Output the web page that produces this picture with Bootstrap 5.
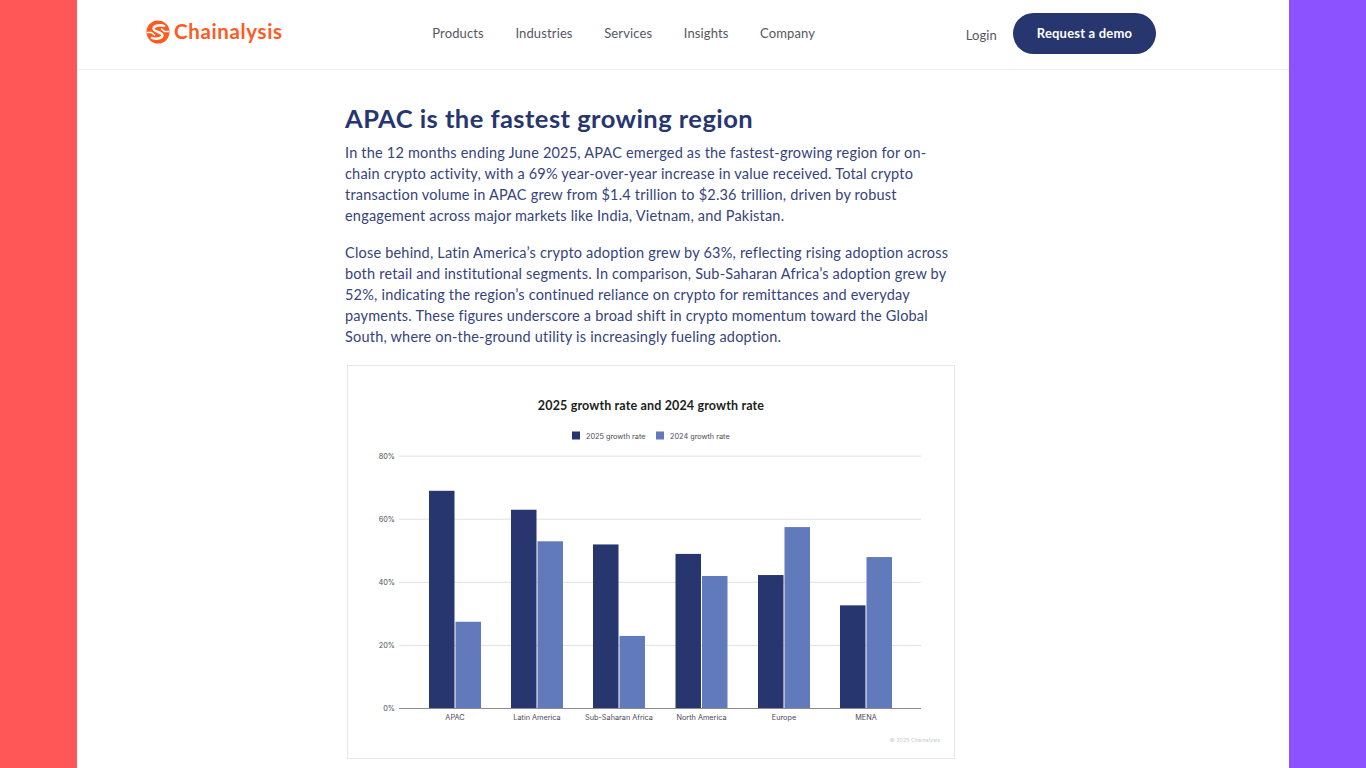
<!DOCTYPE html>
<html lang="en">
<head>
  <meta charset="UTF-8" />
  <meta name="viewport" content="width=device-width, initial-scale=1.0"/>
  <title>Chainalysis - APAC is the fastest growing region</title>
  <link href="https://cdn.jsdelivr.net/npm/bootstrap@5.3.0/dist/css/bootstrap.min.css" rel="stylesheet"/>
  <script src="https://cdn.jsdelivr.net/npm/bootstrap@5.3.0/dist/js/bootstrap.bundle.min.js"></script>
  <style>
  body {
    background: #fff;
    font-family: "Lato", "Liberation Sans", sans-serif;
    height: 768px;
    overflow: hidden;
  }
  .band-red { width: 77px; background: #ff5757; }
  .band-purple { width: 77px; background: #8c52ff; }
  .page-mid { width: 1212px; height: 768px; overflow: hidden; }

  .top-bar {
    height: 70px;
    border-bottom: 1px solid #eeeff2;
    padding: 0 133px 2px 69px;
  }
  .brand-link { margin-bottom: 4px; }
  .brand-word {
    color: #ff5a1f;
    font-size: 20.5px;
    font-weight: 700;
    letter-spacing: .65px;
    line-height: 1;
  }
  .menu-row { margin-left: 149.5px; gap: 31.5px; padding-top: 1px; }
  .menu-row a, .login-link {
    color: #55575f;
    font-size: 13px;
    letter-spacing: .13px;
    text-decoration: none;
  }
  .login-link { margin-left: auto; margin-right: 16px; padding-top: 4px; }
  .demo-btn {
    width: 143px;
    height: 41px;
    background: #27366f;
    color: #fff;
    border-radius: 21px;
    font-size: 13px;
    font-weight: 700;
    letter-spacing: .2px;
    padding: 0;
    border: 0;
  }

  .article-col { width: 611px; margin-left: 268px; padding-top: 32px; color: #36437c; }
  .article-col h2 {
    font-size: 25.5px;
    font-weight: 700;
    line-height: 32px;
    letter-spacing: .45px;
    color: #27366f;
    margin-bottom: 8px;
  }
  .article-col p {
    font-size: 14.5px;
    line-height: 21px;
    letter-spacing: .2px;
    margin-bottom: 16px;
  }
  .chart-box {
    width: 608px;
    height: 394px;
    margin: 18px 0 0 2px;
    border: 1px solid #e6e7ee;
  }
  .chart-box svg { display: block; }
  .chart-title { font-size: 12.5px; font-weight: 700; letter-spacing: .15px; fill: #1c1d22; }
  .chart-small { font-family: "Inter", "Liberation Sans", sans-serif; font-size: 7.3px; fill: #4a4b52; }
  .chart-note { font-family: "Inter", "Liberation Sans", sans-serif; font-size: 5.4px; fill: #c9cad3; }
  .grid-line { stroke: #dfe0e8; stroke-width: 1; }
  .axis-line { stroke: #8a8b90; stroke-width: 1.2; }
  .bar-dark { fill: #27366f; }
  .bar-light { fill: #617abb; }
  </style>
</head>
<body>
<div class="d-flex">
  <div class="band-red"></div>

  <div class="page-mid">
    <header class="top-bar d-flex align-items-center">
      <a href="#" class="brand-link d-flex align-items-center gap-1 text-decoration-none">
        <svg width="24" height="24" viewBox="0 0 24 24">
          <circle cx="12" cy="12" r="11.5" fill="#ff5a1f"/>
          <path d="M19 6.5C15 4.5 8 5 7.5 8.5C7 12 17 12 16.5 15.5C16 19 9 19.5 5 17.5" fill="none" stroke="#fff" stroke-width="2.4"/>
          <path d="M1 12.5L5.5 12.5L9 15.5M23 11.5L18.5 11.5L15 8.5" fill="none" stroke="#fff" stroke-width="1.6"/>
        </svg>
        <span class="brand-word">Chainalysis</span>
      </a>
      <nav class="menu-row d-flex">
        <a href="#">Products</a>
        <a href="#">Industries</a>
        <a href="#">Services</a>
        <a href="#">Insights</a>
        <a href="#">Company</a>
      </nav>
      <a href="#" class="login-link">Login</a>
      <button class="btn demo-btn">Request a demo</button>
    </header>

    <main class="article-col">
      <h2>APAC is the fastest growing region</h2>
      <p>In the 12 months ending June 2025, APAC emerged as the fastest-growing region for on-chain crypto activity, with a 69% year-over-year increase in value received. Total crypto transaction volume in APAC grew from $1.4 trillion to $2.36 trillion, driven by robust engagement across major markets like India, Vietnam, and Pakistan.</p>
      <p>Close behind, Latin America’s crypto adoption grew by 63%, reflecting rising adoption across both retail and institutional segments. In comparison, Sub-Saharan Africa’s adoption grew by 52%, indicating the region’s continued reliance on crypto for remittances and everyday payments. These figures underscore a broad shift in crypto momentum toward the Global South, where on-the-ground utility is increasingly fueling adoption.</p>

      <div class="chart-box">
        <!-- viewBox uses page coordinates minus the box origin (348,366) -->
        <svg id="chart" width="606" height="392" viewBox="348 366 606 392"></svg>
      </div>
    </main>
  </div>

  <div class="band-purple"></div>
</div>

<script>
const NS = 'http://www.w3.org/2000/svg';
const chart = document.getElementById('chart');
const baseY = 708.5, pxPerPct = 3.155;

const grupos = [
  { nombre: 'APAC', x: 429, a: 69, b: 27.5 },
  { nombre: 'Latin America', x: 511, a: 63, b: 53 },
  { nombre: 'Sub-Saharan Africa', x: 593, a: 52, b: 23 },
  { nombre: 'North America', x: 675.5, a: 49, b: 42 },
  { nombre: 'Europe', x: 758, a: 42.3, b: 57.5 },
  { nombre: 'MENA', x: 840, a: 32.7, b: 48 },
];

function add(tag, attrs, text) {
  const el = document.createElementNS(NS, tag);
  Object.keys(attrs).forEach(k => el.setAttribute(k, attrs[k]));
  if (text) el.textContent = text;
  chart.appendChild(el);
}

add('text', { x: 651, y: 410, 'text-anchor': 'middle', class: 'chart-title' }, '2025 growth rate and 2024 growth rate');

add('rect', { x: 572, y: 431.5, width: 8, height: 8, class: 'bar-dark' });
add('text', { x: 586, y: 438.5, class: 'chart-small' }, '2025 growth rate');
add('rect', { x: 656, y: 431.5, width: 8, height: 8, class: 'bar-light' });
add('text', { x: 670, y: 438.5, class: 'chart-small' }, '2024 growth rate');

[80, 60, 40, 20].forEach(p => {
  const y = baseY - p * pxPerPct;
  add('line', { x1: 399, x2: 921, y1: y, y2: y, class: 'grid-line' });
  add('text', { x: 395, y: y + 2.5, 'text-anchor': 'end', class: 'chart-small' }, p + '%');
});
add('text', { x: 395, y: baseY + 2.5, 'text-anchor': 'end', class: 'chart-small' }, '0%');

grupos.forEach(g => {
  add('rect', { x: g.x, y: baseY - g.a * pxPerPct, width: 25.5, height: g.a * pxPerPct, class: 'bar-dark' });
  add('rect', { x: g.x + 26.5, y: baseY - g.b * pxPerPct, width: 25.5, height: g.b * pxPerPct, class: 'bar-light' });
  add('text', { x: g.x + 26, y: 720, 'text-anchor': 'middle', class: 'chart-small' }, g.nombre);
});
add('line', { x1: 399, x2: 921, y1: baseY, y2: baseY, class: 'axis-line' });

add('text', { x: 940, y: 742, 'text-anchor': 'end', class: 'chart-note' }, '© 2025 Chainalysis');
</script>
</body>
</html>
